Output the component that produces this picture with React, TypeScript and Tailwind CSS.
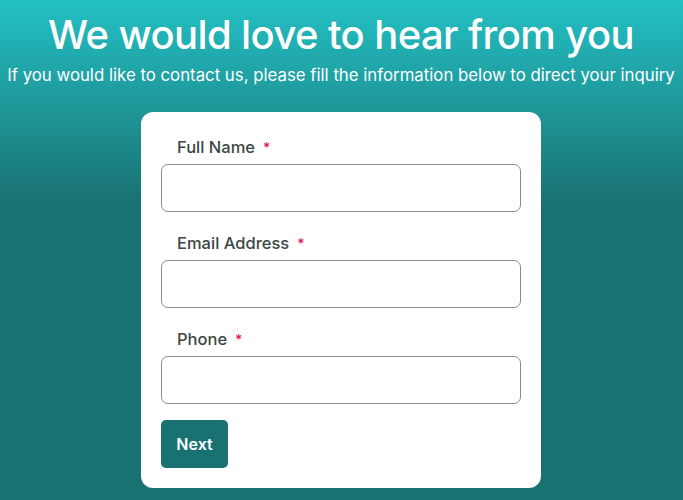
import React from "react";

const Field = ({ label }: { label: string }) => (
  <div className="flex flex-col">
    <label className="pl-4 h-[34px] flex items-center text-[16.5px] font-medium text-[#3b4644]">
      {label}
      <span className="ml-[8px] text-[#e5195e] text-[14px]">*</span>
    </label>
    <input className="h-[48px] w-full rounded-[7px] border border-[#8a8a8a] bg-white outline-none" />
  </div>
);

export default function App() {
  return (
    <div
      className="w-[683px] h-[500px] pr-[1px] overflow-hidden bg-[linear-gradient(180deg,#23c0c4_0px,#1a7171_205px,#1a7171_500px)] flex flex-col items-center"
      style={{ fontFamily: "Inter, 'Noto Sans', sans-serif" }}
    >
      <h1 className="mt-[12px] text-[40px] leading-[46px] font-medium text-white tracking-[-0.6px]">
        We would love to hear from you
      </h1>
      <p className="mt-[7px] text-[16.8px] leading-[20px] text-white whitespace-nowrap">
        If you would like to contact us, please fill the information below to direct your inquiry
      </p>
      <div className="mt-[27px] w-[400px] rounded-[12px] bg-white px-[20px] pt-[18px] pb-[20px] flex flex-col gap-[14px]">
        <Field label="Full Name" />
        <Field label="Email Address" />
        <Field label="Phone" />
        <button className="mt-[2px] self-start h-[48px] w-[67px] rounded-[5px] bg-[#1a7171] text-white text-[16px] font-semibold">
          Next
        </button>
      </div>
    </div>
  );
}
